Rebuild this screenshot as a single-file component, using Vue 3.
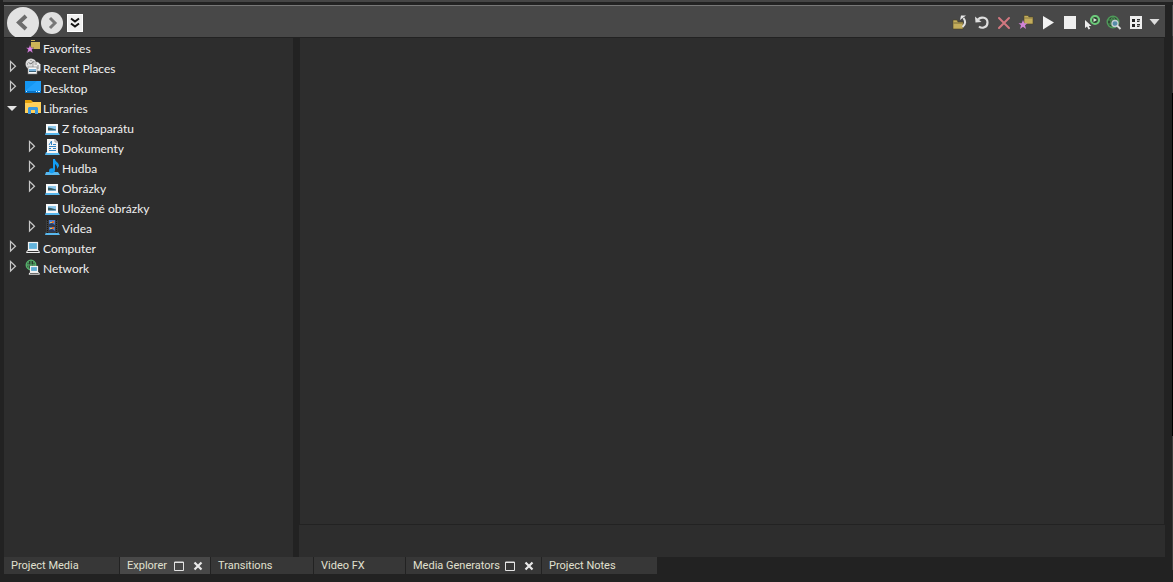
<script setup>
import { ref, computed } from 'vue'

const tree = ref([
  { id: 'favorites', name: 'Favorites', icon: 'favorites' },
  { id: 'recent', name: 'Recent Places', icon: 'recent', expandable: true },
  { id: 'desktop', name: 'Desktop', icon: 'desktop', expandable: true },
  {
    id: 'libraries',
    name: 'Libraries',
    icon: 'libraries',
    expandable: true,
    open: true,
    children: [
      { id: 'camera', name: 'Z fotoaparátu', icon: 'pictures' },
      { id: 'documents', name: 'Dokumenty', icon: 'documents', expandable: true },
      { id: 'music', name: 'Hudba', icon: 'music', expandable: true },
      { id: 'pictures', name: 'Obrázky', icon: 'pictures', expandable: true },
      { id: 'saved', name: 'Uložené obrázky', icon: 'pictures' },
      { id: 'videos', name: 'Videa', icon: 'videos', expandable: true }
    ]
  },
  { id: 'computer', name: 'Computer', icon: 'computer', expandable: true },
  { id: 'network', name: 'Network', icon: 'network', expandable: true }
])

const rows = computed(() => {
  const list = []
  tree.value.forEach((node) => {
    list.push({ node, child: false })
    if (node.open && node.children) {
      node.children.forEach((item) => list.push({ node: item, child: true }))
    }
  })
  return list
})

const toggle = (node) => {
  node.open = !node.open
}

const tools = [
  { id: 'up', label: 'Up one level' },
  { id: 'refresh', label: 'Refresh' },
  { id: 'delete', label: 'Delete' },
  { id: 'favorite', label: 'Add to favorites' },
  { id: 'play', label: 'Start preview' },
  { id: 'stop', label: 'Stop preview' },
  { id: 'auto', label: 'Auto preview' },
  { id: 'web', label: 'Get media from the web' },
  { id: 'views', label: 'Views' }
]

const tabs = [
  { id: 'media', name: 'Project Media', size: 'wide' },
  { id: 'explorer', name: 'Explorer', size: 'fit', controls: true },
  { id: 'transitions', name: 'Transitions', size: 'medium' },
  { id: 'fx', name: 'Video FX', size: 'narrow' },
  { id: 'generators', name: 'Media Generators', size: 'large', controls: true },
  { id: 'notes', name: 'Project Notes', size: 'wide' }
]
const activeTab = ref('explorer')
</script>

<template>
  <div class="window">
    <div class="top-strip"></div>

    <div class="dock">
      <header class="toolbar">
        <nav class="history">
          <button class="nav-button back" aria-label="Back">
            <svg width="32" height="32" viewBox="0 0 32 32">
              <circle cx="16" cy="16" r="16" fill="#e2e2e2" />
              <path d="M19 9L12 15.5L19 22" fill="none" stroke="#6c6c6c" stroke-width="4" />
            </svg>
          </button>
          <button class="nav-button" aria-label="Forward">
            <svg width="22" height="22" viewBox="0 0 22 22">
              <circle cx="11" cy="11" r="11" fill="#e0e0e0" />
              <path d="M9 6L14 11L9 16" fill="none" stroke="#777" stroke-width="3" />
            </svg>
          </button>
          <button class="nav-button history-menu" aria-label="Recent folders">
            <svg width="16" height="18" viewBox="0 0 16 18">
              <rect x="0.5" y="0.5" width="15" height="17" fill="#f0f0f0" stroke="#fff" />
              <path d="M4 4.5L8 7.5L12 4.5M4 9.5L8 12.5L12 9.5" fill="none" stroke="#111" stroke-width="2" />
            </svg>
          </button>
        </nav>

        <div class="tools">
          <button v-for="tool in tools" :key="tool.id" class="tool" :aria-label="tool.label">
            <svg width="16" height="16" viewBox="0 0 16 16">
              <g v-if="tool.id === 'up'">
                <path d="M1 5H5L6 7H11V14H1Z" fill="#c3ad5c" stroke="#4b4326" stroke-width="0.6" />
                <path d="M1.5 8H10.5" stroke="#776936" />
                <path d="M10.5 12C13.5 9.5 14 6.5 11.5 3" fill="none" stroke="#e2e2e2" stroke-width="2" />
                <path d="M8 5L9 0.5L14 0.5Z" fill="#e8e8e8" />
              </g>
              <g v-else-if="tool.id === 'refresh'">
                <path d="M4 4.5C7 1 13.5 2.5 13.5 7.5C13.5 12.5 8 14 5 11.5" fill="none" stroke="#dedede" stroke-width="2.2" />
                <path d="M1 1.5L1.5 7.5L7.5 7Z" fill="#dedede" />
              </g>
              <path v-else-if="tool.id === 'delete'" d="M3 3L13 13M13 3L3 13" fill="none" stroke="#d27880" stroke-width="2" stroke-linecap="round" />
              <g v-else-if="tool.id === 'favorite'">
                <path d="M6 0.5H10L11 2H15V9H6Z" fill="#c3ad5c" stroke="#4b4326" stroke-width="0.6" />
                <path d="M6 3H15" stroke="#8b7a40" />
                <path d="M5 5L6.3 8.2H9.5L7 10.2L8 14L5 11.8L2 14L3 10.2L0.5 8.2H3.7Z" fill="#d184d6" />
              </g>
              <path v-else-if="tool.id === 'play'" d="M3 1L14 7.5L3 14.5Z" fill="#f2f2f2" />
              <rect v-else-if="tool.id === 'stop'" x="2" y="1" width="12" height="13" fill="#efefef" />
              <g v-else-if="tool.id === 'auto'">
                <circle cx="11" cy="5" r="4" fill="#303b31" stroke="#6cc97a" stroke-width="2.2" />
                <path d="M9.5 3L13 5L9.5 7Z" fill="#d9eddb" />
                <path d="M1 5V13L3 11.5L4.6 14.5L6.2 13.7L4.8 11H7.5Z" fill="#ececec" />
              </g>
              <g v-else-if="tool.id === 'web'">
                <circle cx="7" cy="7" r="5.8" fill="#304433" stroke="#4f9a5a" stroke-width="1.4" />
                <path d="M2 5H12M2 9H12M7 1.5V12.5M7 1.5C4 4 4 10 7 12.5M7 1.5C10 4 10 10 7 12.5" fill="none" stroke="#4f9a5a" stroke-width="0.9" />
                <circle cx="9" cy="8.5" r="3" fill="#568ca8" stroke="#c4ced2" stroke-width="1.3" />
                <path d="M11 10.5L14.5 14" stroke="#ddd" stroke-width="2" />
              </g>
              <g v-else>
                <rect x="2" y="1" width="12" height="13" fill="#eee" />
                <path d="M4 4H7V7H4ZM4 9H7V12H4Z" fill="#222" />
                <path d="M9 4H12V7H9ZM9 9H12V12H9Z" fill="#999" />
                <path d="M9 4.5H12M9 6.5H11M9 9.5H12M9 11.5H11" stroke="#333" />
              </g>
            </svg>
          </button>
          <button class="tool views-menu" aria-label="Choose view">
            <svg width="10" height="16" viewBox="0 0 10 16"><path d="M-0.5 4H9.5L4.5 10Z" fill="#ddd" /></svg>
          </button>
        </div>
      </header>

      <main class="panes">
        <ul class="tree">
          <li v-for="row in rows" :key="row.node.id" class="tree-row" :class="{ child: row.child }">
            <button
              v-if="row.node.expandable"
              class="expander"
              :aria-label="row.node.name"
              :aria-expanded="!!row.node.open"
              @click="toggle(row.node)"
            >
              <svg width="16" height="18" viewBox="0 0 16 18">
                <path v-if="row.node.open" d="M3 8H13L8 13Z" fill="#e4e4e4" />
                <path v-else d="M6.5 3.5V13L11.5 8.2Z" fill="none" stroke="#c8c8c8" stroke-width="1.2" />
              </svg>
            </button>
            <span v-else class="expander"></span>

            <svg class="node-icon" width="18" height="18" viewBox="0 0 18 18">
              <g v-if="row.node.icon === 'favorites'">
                <path d="M7 2H11V4H16V11H7Z" fill="#cdb457" />
                <path d="M7 3.5H11" stroke="#2d2d2d" />
                <path d="M6 7L7.2 9.8H10L7.8 11.6L8.8 15L6 13L3.2 15L4.2 11.6L2 9.8H4.8Z" fill="#df83e8" stroke="#2d2d2d" stroke-width="0.3" />
              </g>
              <g v-else-if="row.node.icon === 'recent'">
                <circle cx="7" cy="6" r="5.5" fill="#ddd" />
                <path d="M3 6H4M7 2V3M7 6L9.5 3M7 6L4.5 4.5" stroke="#777" />
                <path d="M9 4H14L16.5 6.5V13H9Z" fill="#eee" stroke="#777" stroke-width="0.6" />
                <path d="M10.5 6H13M13 8H15M13 10H15" stroke="#888" />
                <rect x="4" y="9" width="9" height="7" fill="#fafafa" stroke="#777" stroke-width="0.6" />
                <rect x="5" y="11" width="7" height="3" fill="#79b3dc" />
                <rect x="5" y="13" width="7" height="1" fill="#3c6074" />
              </g>
              <g v-else-if="row.node.icon === 'desktop'">
                <rect x="1" y="3" width="16" height="12" fill="#1496f2" />
                <path d="M1 13L13 3H17V13Z" fill="#22a0fb" />
                <rect x="1" y="13" width="16" height="2" fill="#0874c8" />
                <path d="M2 13.5H3M12 13.5H13M14 13.5H16" stroke="#d7efff" />
              </g>
              <g v-else-if="row.node.icon === 'libraries'">
                <path d="M1 2H7L9 4H17V8H1Z" fill="#e5a10b" />
                <path d="M1 5H7L9 4H17V15H1Z" fill="#ffd05b" />
                <path d="M4 16V10L5 9H13L14 10V16H11V12H7V16Z" fill="#3b98e0" />
              </g>
              <g v-else-if="row.node.icon === 'pictures'">
                <path d="M3 14H15L17 17H2Z" fill="#58b8ef" />
                <rect x="3" y="6" width="12" height="9" fill="#f8f8f8" />
                <rect x="5" y="8" width="8" height="5" fill="#8ec9ee" />
                <path d="M5 9.5L8 10L13 11.5V13H5Z" fill="#365b65" />
                <path d="M5 12.5H13" stroke="#77a8c4" />
              </g>
              <g v-else-if="row.node.icon === 'documents'">
                <path d="M3 14H15L17 17H2Z" fill="#58b8ef" />
                <path d="M4 1H12L15 4V15H4Z" fill="#f6f6f6" />
                <path d="M12 1V4H15" fill="none" stroke="#999" />
                <path d="M6 7L8.5 3V7M10 6.5H13M6 8.5H13M6 10.5H8M10 10.5H13M6 12.5H13" fill="none" stroke="#3284c4" />
              </g>
              <g v-else-if="row.node.icon === 'music'">
                <path d="M3 14H15L17 17H2Z" fill="#58b8ef" />
                <path d="M10 1H12C12 4 16 4 16 8L14 11C14.5 8 13 7 12 6V12C12 16 6 16 6 13C6 10 9 10 10 10.5Z" fill="#129cf3" />
              </g>
              <g v-else-if="row.node.icon === 'videos'">
                <path d="M3 14H15L17 17H2Z" fill="#58b8ef" />
                <rect x="3" y="2" width="12" height="13" fill="#3c3c3c" />
                <path d="M4.5 2V15M13.5 2V15" stroke="#171717" stroke-dasharray="1 1" />
                <rect x="6" y="2" width="6" height="6" fill="#477dce" />
                <rect x="6" y="9" width="6" height="5" fill="#477dce" />
                <path d="M6 6L9 5L12 7V8H6ZM6 12L9 11L12 13V14H6Z" fill="#29395b" />
                <path d="M9 3H11V5H9ZM9 9H11V11H9Z" fill="#dc6d3a" />
                <path d="M7 4H9V5H7ZM7 10H9V11H7Z" fill="#e4c25b" />
              </g>
              <g v-else-if="row.node.icon === 'computer'">
                <rect x="4.5" y="4.5" width="9" height="7" fill="#62b3dc" stroke="#f1f1f1" stroke-width="1.2" />
                <path d="M2.5 14.5L3.5 12.5H14.5L15.5 14.5Z" fill="#333" stroke="#eee" />
              </g>
              <g v-else>
                <circle cx="7" cy="7" r="4.8" fill="#293c2e" stroke="#57b36c" stroke-width="1.3" />
                <path d="M2.5 7H11.5M7 2.5V11.5M4.5 3.5C3.5 6 4 9 5 11M9.5 3.5C10.5 6 10 9 9 11" fill="none" stroke="#57b36c" />
                <rect x="6.5" y="8.5" width="7" height="5" fill="#5cabd2" stroke="#f1f1f1" stroke-width="1.2" />
                <path d="M5 16.2L6 14.5H14.5L15.5 16.2Z" fill="#333" stroke="#eee" />
              </g>
            </svg>
            <span class="node-name">{{ row.node.name }}</span>
          </li>
        </ul>

        <div class="splitter"></div>

        <section class="content">
          <div class="file-list"></div>
          <div class="file-info"></div>
        </section>
      </main>

      <footer class="tabs">
        <div v-for="tab in tabs" :key="tab.id" class="tab" :class="[tab.size, { active: activeTab === tab.id }]">
          <button class="tab-name" @click="activeTab = tab.id">{{ tab.name }}</button>
          <div v-if="tab.controls" class="tab-controls">
            <button aria-label="Maximize">
              <svg width="10" height="10" viewBox="0 0 10 10">
                <path d="M0.5 1H9.5V9.5H0.5ZM0 1.5H10" fill="none" stroke="#e2e2e2" />
              </svg>
            </button>
            <button aria-label="Close">
              <svg width="10" height="10" viewBox="0 0 10 10">
                <path d="M1.5 1.5L8.5 8.5M8.5 1.5L1.5 8.5" stroke="#e8e8e8" stroke-width="2.2" />
              </svg>
            </button>
          </div>
        </div>
      </footer>
    </div>
  </div>
</template>

<style>
body {
  background: #222222;
}
</style>

<style scoped>
.window {
  min-height: 100vh;
  box-sizing: border-box;
  display: flex;
  flex-direction: column;
  padding-bottom: 8px;
  background-color: #222222;
  /* edge of the neighbouring dock */
  background-image: linear-gradient(#222222 5px, #4a4a4a 5px 36px, #333333 36px 93px, #000000 93px 75%, #3c3c3c 75% 98%, #222222 98%);
  background-size: 1px 100%;
  background-position: right top;
  background-repeat: no-repeat;
  color: #f0f0f0;
  font-family: "Segoe UI", Lato, "Open Sans", sans-serif;
  font-size: 12px;
}

button {
  display: flex;
  align-items: center;
  justify-content: center;
  padding: 0;
  border: none;
  background: transparent;
  color: inherit;
  font: inherit;
  cursor: pointer;
}

svg {
  display: block;
  flex-shrink: 0;
}

.top-strip {
  height: 2px;
  margin: 0 0 3px 3px;
  background: #454545;
}

.dock {
  flex: 1;
  display: flex;
  flex-direction: column;
  margin: 0 8px 0 4px;
}

.toolbar {
  height: 32px;
  box-sizing: border-box;
  display: flex;
  align-items: center;
  justify-content: space-between;
  padding: 2px 5px 0 3px;
  border-top: 1px solid #777777;
  background: #484848;
  overflow: hidden;
}

.history {
  display: flex;
  align-items: center;
  gap: 2px;
}

.history-menu {
  margin-left: 2px;
}

.tools {
  display: flex;
  align-items: center;
  gap: 6px;
}

.tool {
  width: 16px;
  height: 16px;
}

.views-menu {
  width: 10px;
}

.views-menu svg {
  overflow: visible;
}

.panes {
  flex: 1;
  display: flex;
  border-top: 1px solid #222222;
}

.tree {
  width: 289px;
  flex-shrink: 0;
  margin: 0;
  padding: 0;
  list-style: none;
  background: #2d2d2d;
}

.tree-row {
  height: 20px;
  display: flex;
  align-items: flex-start;
}

.tree-row.child {
  padding-left: 19px;
}

.expander {
  width: 16px;
  height: 18px;
  flex-shrink: 0;
}

.node-icon {
  margin-left: 4px;
}

.node-name {
  margin-left: 1px;
  line-height: 22px;
  white-space: nowrap;
}

.splitter {
  width: 6px;
  background: #222222;
  cursor: col-resize;
}

.content {
  flex: 1;
  display: flex;
  flex-direction: column;
}

.file-list {
  flex: 1;
  margin: 0 1px;
  background: #2d2d2d;
}

.file-info {
  height: 32px;
  border-top: 1px solid #222222;
  background: #2d2d2d;
}

.tabs {
  height: 17px;
  display: flex;
  gap: 1px;
  font-family: Tahoma, Roboto, "Noto Sans", sans-serif;
  font-size: 11px;
}

.tab {
  box-sizing: border-box;
  display: flex;
  align-items: center;
  justify-content: space-between;
  padding: 0 7px;
  background: #373737;
}

.tab.active {
  background: #484848;
}

.tab-name {
  height: 17px;
  line-height: 17px;
  white-space: nowrap;
  color: #e0e0d0;
}

.tab-controls {
  display: flex;
  gap: 9px;
}

.wide {
  width: 115px;
}

.fit {
  width: 90px;
}

.medium {
  width: 102px;
}

.narrow {
  width: 91px;
}

.large {
  width: 135px;
}
</style>
